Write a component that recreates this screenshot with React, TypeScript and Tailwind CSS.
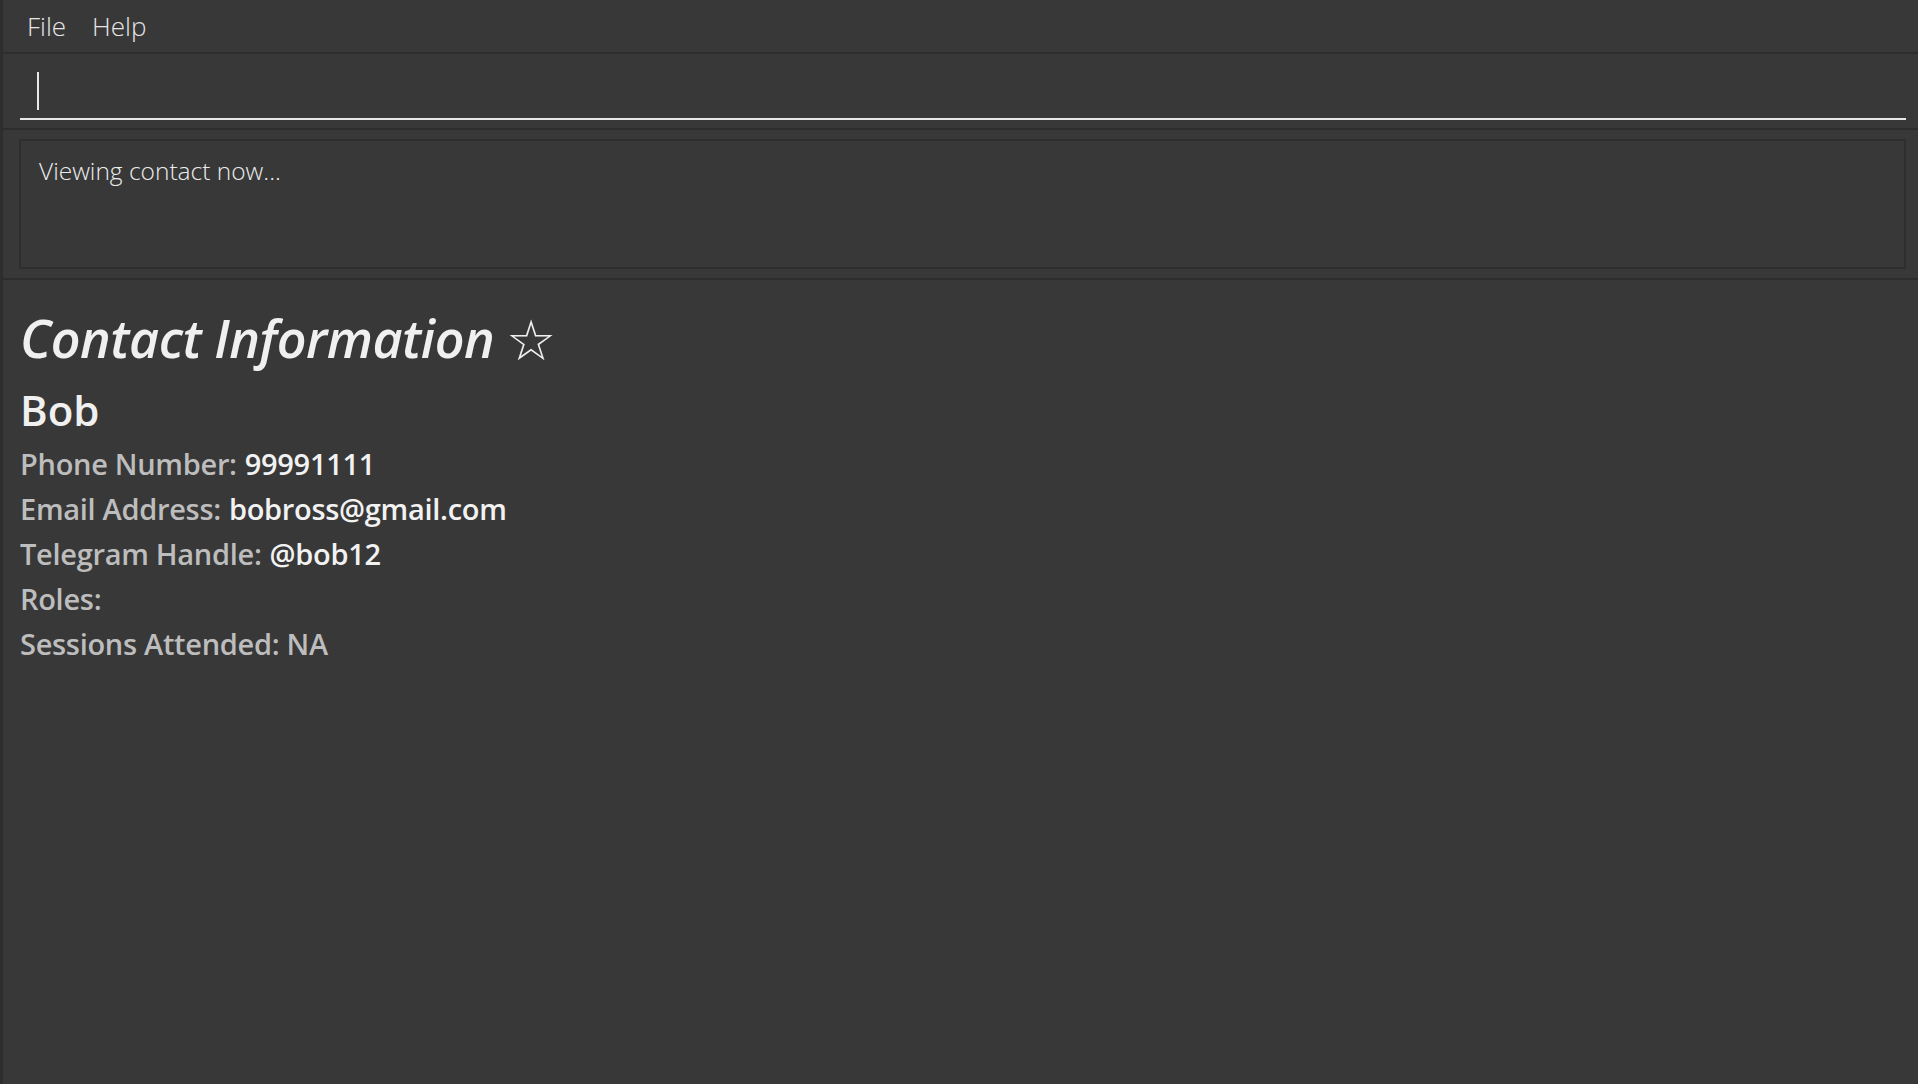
import React from 'react';

const font = { fontFamily: '"Open Sans", "Noto Sans", sans-serif' };

function Field({ label, value }: { label: string; value: string }) {
  return (
    <div className="h-[45px] flex items-center text-[29px] font-semibold tracking-[-0.3px]">
      <span className="text-[#bdbdbd]">{label}</span>
      {value && <span className="ml-2 text-[#f2f2f2]">{value}</span>}
    </div>
  );
}

export default function App() {
  return (
    <div className="w-[1918px] h-[1084px] bg-[#383838] flex flex-col border-l-[3px] border-[#2e2e2e] overflow-hidden" style={font}>
      {/* MENU BAR */}
      <div className="h-[54px] flex items-center gap-[26px] pl-[24px] border-b-2 border-[#2d2d2d] text-[26px] font-light text-[#e6e6e6]">
        <span>File</span>
        <span>Help</span>
      </div>

      {/* COMMAND BOX */}
      <div className="h-[76px] pl-[17px] pr-[12px] pt-[10px] border-b-2 border-[#2d2d2d]">
        <div className="h-[56px] border-b-2 border-[#e8e8e8] flex items-center pl-[17px]">
          <div className="w-[2px] h-[38px] bg-[#e8e8e8]" />
        </div>
      </div>

      {/* RESULT DISPLAY */}
      <div className="h-[150px] pl-[16px] pr-[12px] py-[9px] border-b-2 border-[#2d2d2d]">
        <div className="h-full border-2 border-[#2e2e2e] px-[18px] pt-[12px] text-[24.5px] font-light text-[#ececec]">
          Viewing contact now...
        </div>
      </div>

      {/* CONTACT */}
      <div className="px-[17px] pt-[17px] flex flex-col">
        <div className="h-[81px] flex items-center text-[52px] italic font-semibold text-[#f0f0f0] tracking-[-0.5px]">
          Contact Information <span className="ml-[12px] not-italic font-normal text-[56px]">☆</span>
        </div>
        <div className="h-[63px] flex items-center text-[42px] font-semibold text-[#f0f0f0]">Bob</div>
        <Field label="Phone Number:" value="99991111" />
        <Field label="Email Address:" value="bobross@gmail.com" />
        <Field label="Telegram Handle:" value="@bob12" />
        <Field label="Roles:" value="" />
        <Field label="Sessions Attended: NA" value="" />
      </div>
    </div>
  );
}
